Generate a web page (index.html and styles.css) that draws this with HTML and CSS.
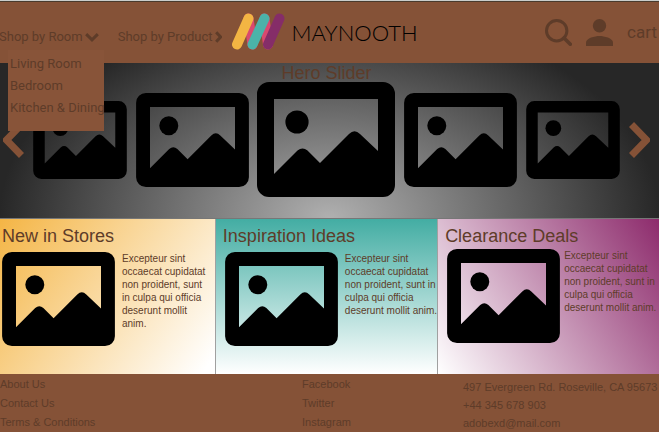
FILE: index.html
```html
<!DOCTYPE html>
<html lang="en">
<head>
<meta charset="utf-8">
<meta name="viewport" content="width=device-width, initial-scale=1">
<title>Maynooth</title>
<link rel="stylesheet" href="styles.css">
</head>
<body>
<svg class="sprite" aria-hidden="true">
  <symbol id="picture" viewBox="0 0 138 115">
    <path fill-rule="evenodd" d="M12 0H126A12 12 0 0 1 138 12V103A12 12 0 0 1 126 115H12A12 12 0 0 1 0 103V12A12 12 0 0 1 12 0ZM17 17V92L40.500 68.500Q45.500 64.500 50.500 68.500L63 81L92 52Q97.500 46.500 103 52L121 69V17Z"/>
    <circle cx="40" cy="40" r="11.600"/>
  </symbol>
</svg>
<header class="header">
  <nav class="nav">
    <div class="menu">
      <button class="nav-button" type="button">Shop by Room
        <svg class="chevron-down" viewBox="0 0 14 9" aria-hidden="true"><path d="M1.200 1.200L7 6.800L12.800 1.200"/></svg>
      </button>
      <div class="dropdown">
        <a href="#">Living Room</a>
        <a href="#">Bedroom</a>
        <a href="#">Kitchen &amp; Dining</a>
      </div>
    </div>
    <button class="nav-button" type="button">Shop by Product
      <svg class="chevron-right" viewBox="0 0 7 12" aria-hidden="true"><path d="M1.200 1.200L5.600 6L1.200 10.800"/></svg>
    </button>
  </nav>
  <a class="logo" href="#">
    <svg class="logo-mark" viewBox="0 0 54 38" aria-hidden="true">
      <path class="pink" d="M17.500 5.500L21.500 31.500M33.500 5.500L37 31.500"/>
      <path class="yellow" d="M17.500 5.500L6 31.500"/>
      <path class="teal" d="M33.500 5.500L21.500 31.500"/>
      <path class="purple" d="M48.500 5.500L37 31.500"/>
    </svg>
    <span>MAYNOOTH</span>
  </a>
  <div class="tools">
    <button class="tool" type="button" aria-label="Search">
      <svg viewBox="0 0 27 27" aria-hidden="true"><circle cx="11.700" cy="11.700" r="10.200" fill="none" stroke="currentColor" stroke-width="3"/><path d="M19 19L25.300 25.300" stroke="currentColor" stroke-width="3.600" stroke-linecap="round"/></svg>
    </button>
    <button class="tool" type="button" aria-label="Account">
      <svg viewBox="0 0 27 27" aria-hidden="true"><circle cx="13.500" cy="6.700" r="6.700" fill="currentColor"/><path d="M0 27V23.600C0 19 9 17 13.500 17S27 19 27 23.600V27Z" fill="currentColor"/></svg>
    </button>
    <a class="cart" href="#">cart</a>
  </div>
</header>
<main>
  <section class="hero">
    <h1>Hero Slider</h1>
    <div class="slides">
      <button class="arrow" type="button" aria-label="Previous"><svg viewBox="0 0 21 36" aria-hidden="true"><path d="M18.500 2.500L3.500 18L18.500 33.500"/></svg></button>
      <svg class="picture small" role="img"><use href="#picture"/></svg>
      <svg class="picture medium" role="img"><use href="#picture"/></svg>
      <svg class="picture large" role="img"><use href="#picture"/></svg>
      <svg class="picture medium" role="img"><use href="#picture"/></svg>
      <svg class="picture small" role="img"><use href="#picture"/></svg>
      <button class="arrow" type="button" aria-label="Next"><svg viewBox="0 0 21 36" aria-hidden="true"><path d="M2.500 2.500L17.500 18L2.500 33.500"/></svg></button>
    </div>
  </section>
  <section class="cards">
    <article class="card stores">
      <h2>New in Stores</h2>
      <div class="card-body">
        <svg class="picture medium" role="img"><use href="#picture"/></svg>
        <p>Excepteur sint<br>occaecat cupidatat<br>non proident, sunt<br>in culpa qui officia<br>deserunt mollit<br>anim.</p>
      </div>
    </article>
    <article class="card ideas">
      <h2>Inspiration Ideas</h2>
      <div class="card-body">
        <svg class="picture medium" role="img"><use href="#picture"/></svg>
        <p>Excepteur sint<br>occaecat cupidatat<br>non proident, sunt in<br>culpa qui officia<br>deserunt mollit anim.</p>
      </div>
    </article>
    <article class="card deals">
      <h2>Clearance Deals</h2>
      <div class="card-body">
        <svg class="picture medium" role="img"><use href="#picture"/></svg>
        <p>Excepteur sint<br>occaecat cupidatat<br>non proident, sunt in<br>culpa qui officia<br>deserunt mollit anim.</p>
      </div>
    </article>
  </section>
</main>
<footer class="footer">
  <nav class="links">
    <a href="#">About Us</a>
    <a href="#">Contact Us</a>
    <a href="#">Terms &amp; Conditions</a>
  </nav>
  <nav class="links">
    <a href="#">Facebook</a>
    <a href="#">Twitter</a>
    <a href="#">Instagram</a>
  </nav>
  <address class="contact">
    <span>497 Evergreen Rd. Roseville, CA 95673</span>
    <span>+44 345 678 903</span>
    <a href="#">adobexd@mail.com</a>
  </address>
</footer>
</body>
</html>
```
FILE: styles.css
```css
* { box-sizing: border-box; }

:root {
  --brown: #855237;
  --ink: #5e3c29;
}

body {
  margin: 0;
  background: var(--brown);
  color: var(--ink);
  font-family: "Liberation Sans", Arial, sans-serif;
  overflow-x: hidden;
}

a { color: inherit; text-decoration: none; }

button {
  margin: 0;
  padding: 0;
  border: 0;
  background: none;
  color: inherit;
  font: inherit;
  cursor: pointer;
}

svg { display: block; flex: none; }

.sprite { position: absolute; width: 0; height: 0; }

.header {
  display: flex;
  align-items: center;
  height: 63px;
  padding-right: 2px;
  border-top: 1px solid #c9cdca;
  box-shadow: inset 0 1px #4a3a2c;
  font-family: Roboto, "Liberation Sans", sans-serif;
}

.nav {
  display: flex;
  gap: 19px;
  margin: 10px 0 0 -1px;
  font-size: 13px;
  line-height: 20px;
}

.menu { position: relative; }

.nav-button {
  display: flex;
  align-items: center;
  gap: 2px;
  white-space: nowrap;
}

.nav-button svg { fill: none; stroke: currentColor; stroke-width: 3; }
.chevron-down { width: 14px; height: 9px; }
.chevron-right { width: 7px; height: 12px; }

.dropdown {
  position: absolute;
  z-index: 1;
  top: 23px;
  left: 9px;
  display: flex;
  flex-direction: column;
  width: 96px;
  padding: 3px 0 12px 2px;
  background: #885439;
  line-height: 22px;
  white-space: nowrap;
}

.logo {
  display: flex;
  align-items: center;
  gap: 7px;
  margin-left: 9px;
  color: #000;
  font-family: Lato, sans-serif;
  font-size: 22px;
  font-weight: 300;
}

.logo-mark {
  width: 54px;
  height: 38px;
  fill: none;
  stroke-width: 10;
  stroke-linecap: round;
}

.pink { stroke: #d9496f; }
.yellow { stroke: #f3b543; }
.teal { stroke: #4bb3a9; }
.purple { stroke: #852d68; }

.tools {
  display: flex;
  align-items: center;
  gap: 14px;
  margin-left: auto;
}

.tool svg { width: 27px; height: 27px; }
.cart { font-size: 17px; }

.hero {
  padding: 1px 9px 21px 3px;
  border-bottom: 1px solid #777;
  background: radial-gradient(330px 210px at 50% 100%, #b0b0b0, #272727);
}

h1, h2 {
  margin: 0;
  font-size: 18px;
  font-weight: 400;
}

h1 { line-height: 18px; text-align: center; }

.slides {
  display: flex;
  align-items: center;
  justify-content: space-between;
}

.arrow svg {
  width: 21px;
  height: 36px;
  fill: none;
  stroke: var(--brown);
  stroke-width: 7;
}

.picture { fill: #000; }
.small { width: 94px; height: 78px; }
.medium { width: 113px; height: 94px; }
.large { width: 138px; height: 115px; }

.cards {
  display: grid;
  grid-template-columns: 215fr 222fr 222fr;
}

.card {
  min-height: 155px;
  padding: 7px 0 0 2px;
}

.card + .card {
  padding-left: 7px;
  border-left: 1px solid #a0a0a0;
}

.card h2 { line-height: 20px; }

.card-body {
  display: flex;
  gap: 7px;
  padding-top: 6px;
}

.card + .card .card-body { padding-left: 2px; }
.deals .card-body { gap: 4px; padding-top: 3px; }

.card p {
  margin: 0;
  font-size: 10px;
  line-height: 13px;
  white-space: nowrap;
}

.stores { background: linear-gradient(125deg, #f4b545, #fff 96%); }
.ideas { background: linear-gradient(#43ada3, #fff); }
.deals { background: linear-gradient(57deg, #fff, #8d2b6c); }

.footer {
  display: grid;
  grid-template-columns: 302fr 161fr 196fr;
  font-size: 11px;
  white-space: nowrap;
}

.links, .contact {
  display: flex;
  flex-direction: column;
  align-items: flex-start;
}

.links { padding-top: 1px; line-height: 19px; }
.contact { padding-top: 4px; line-height: 18px; font-style: normal; }
```
